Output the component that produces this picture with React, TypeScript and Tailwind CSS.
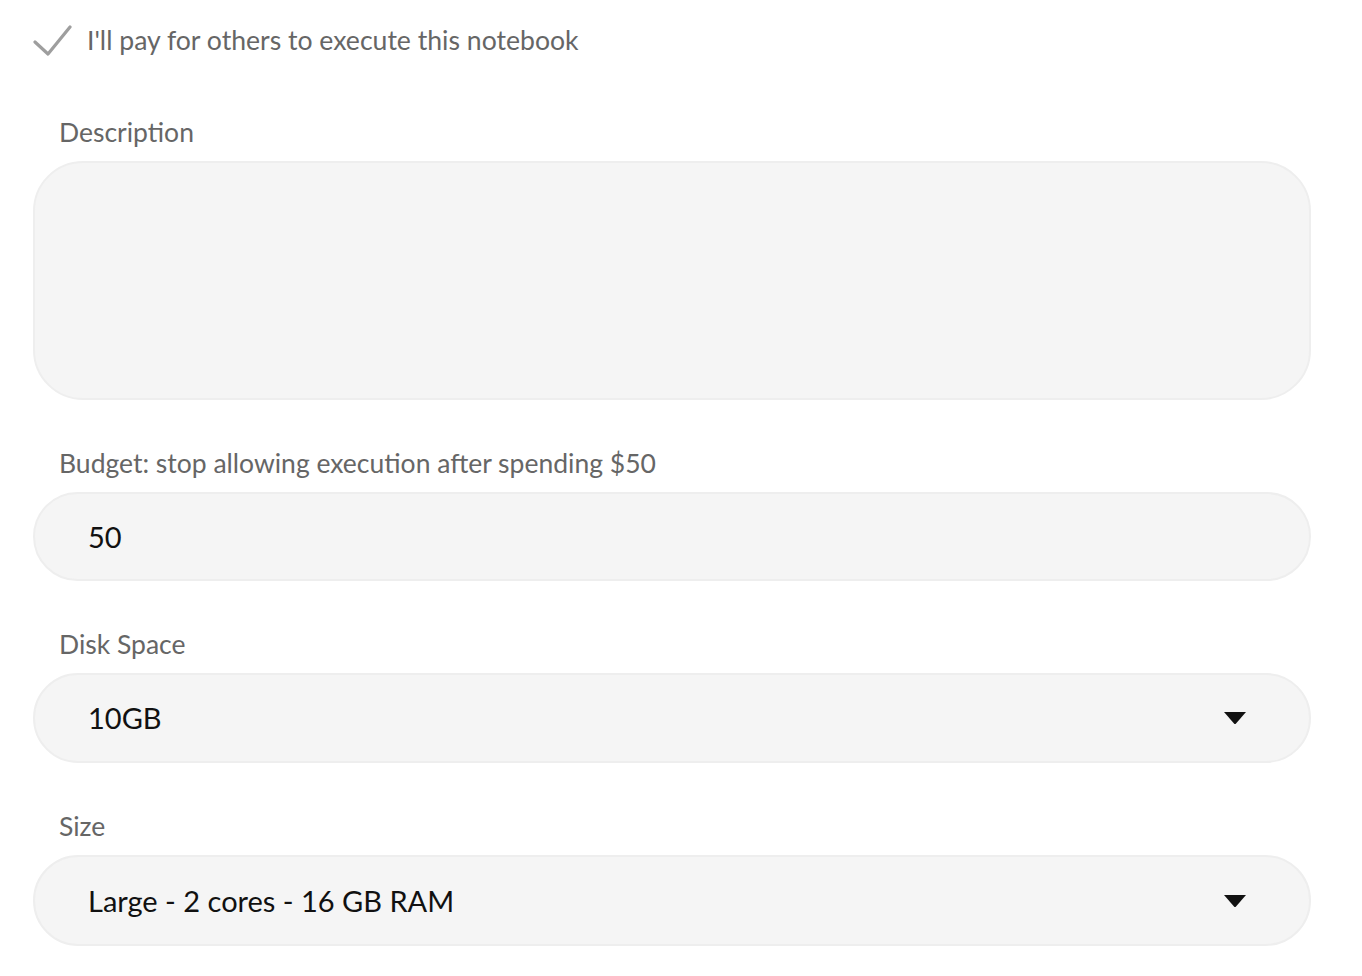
function Caret() {
  return (
    <svg width="24" height="14" viewBox="0 0 24 14" className="shrink-0">
      <path d="M1 1 L23 1 L13 12.5 Q12 13.5 11 12.5 Z" fill="#111" />
    </svg>
  );
}

function CheckMark() {
  return (
    <svg width="40" height="34" viewBox="0 0 40 34" className="shrink-0">
      <path d="M2 18 L15 30 L37 3" fill="none" stroke="#9e9e9e" strokeWidth="3.2" strokeLinecap="round" strokeLinejoin="round" />
    </svg>
  );
}

function Field({ label, children }: { label: string; children: React.ReactNode }) {
  return (
    <div className="flex flex-col">
      <label className="pl-[26px] text-[26.5px] leading-[30px] text-[#666]">{label}</label>
      <div className="mt-[14px]">{children}</div>
    </div>
  );
}

export default function App() {
  return (
    <div
      className="min-h-screen bg-white pl-[33px] pr-[51px] pt-[22px]"
      style={{ fontFamily: 'Lato, "Liberation Sans", sans-serif' }}
    >
      {/* checkbox row */}
      <div className="flex items-center gap-[14px] h-[38px]">
        <CheckMark />
        <span className="text-[26.6px] text-[#666]">I'll pay for others to execute this notebook</span>
      </div>

      <div className="pt-[57px] flex flex-col gap-[48px]">
        <Field label="Description">
          <div className="h-[239px] rounded-[50px] bg-[#f5f5f5] border-2 border-[#eeeeee]" />
        </Field>

        <Field label="Budget: stop allowing execution after spending $50">
          <div className="h-[89px] rounded-full bg-[#f5f5f5] border-2 border-[#eeeeee] flex items-center pl-[53px] text-[29px] text-[#111]">
            50
          </div>
        </Field>

        <Field label="Disk Space">
          <div className="h-[90px] rounded-full bg-[#f5f5f5] border-2 border-[#eeeeee] flex items-center justify-between pl-[53px] pr-[62px] text-[29px] text-[#111]">
            <span>10GB</span>
            <Caret />
          </div>
        </Field>

        <Field label="Size">
          <div className="h-[91px] rounded-full bg-[#f5f5f5] border-2 border-[#eeeeee] flex items-center justify-between pl-[53px] pr-[62px] text-[29px] text-[#111]">
            <span>Large - 2 cores - 16 GB RAM</span>
            <Caret />
          </div>
        </Field>
      </div>
    </div>
  );
}
